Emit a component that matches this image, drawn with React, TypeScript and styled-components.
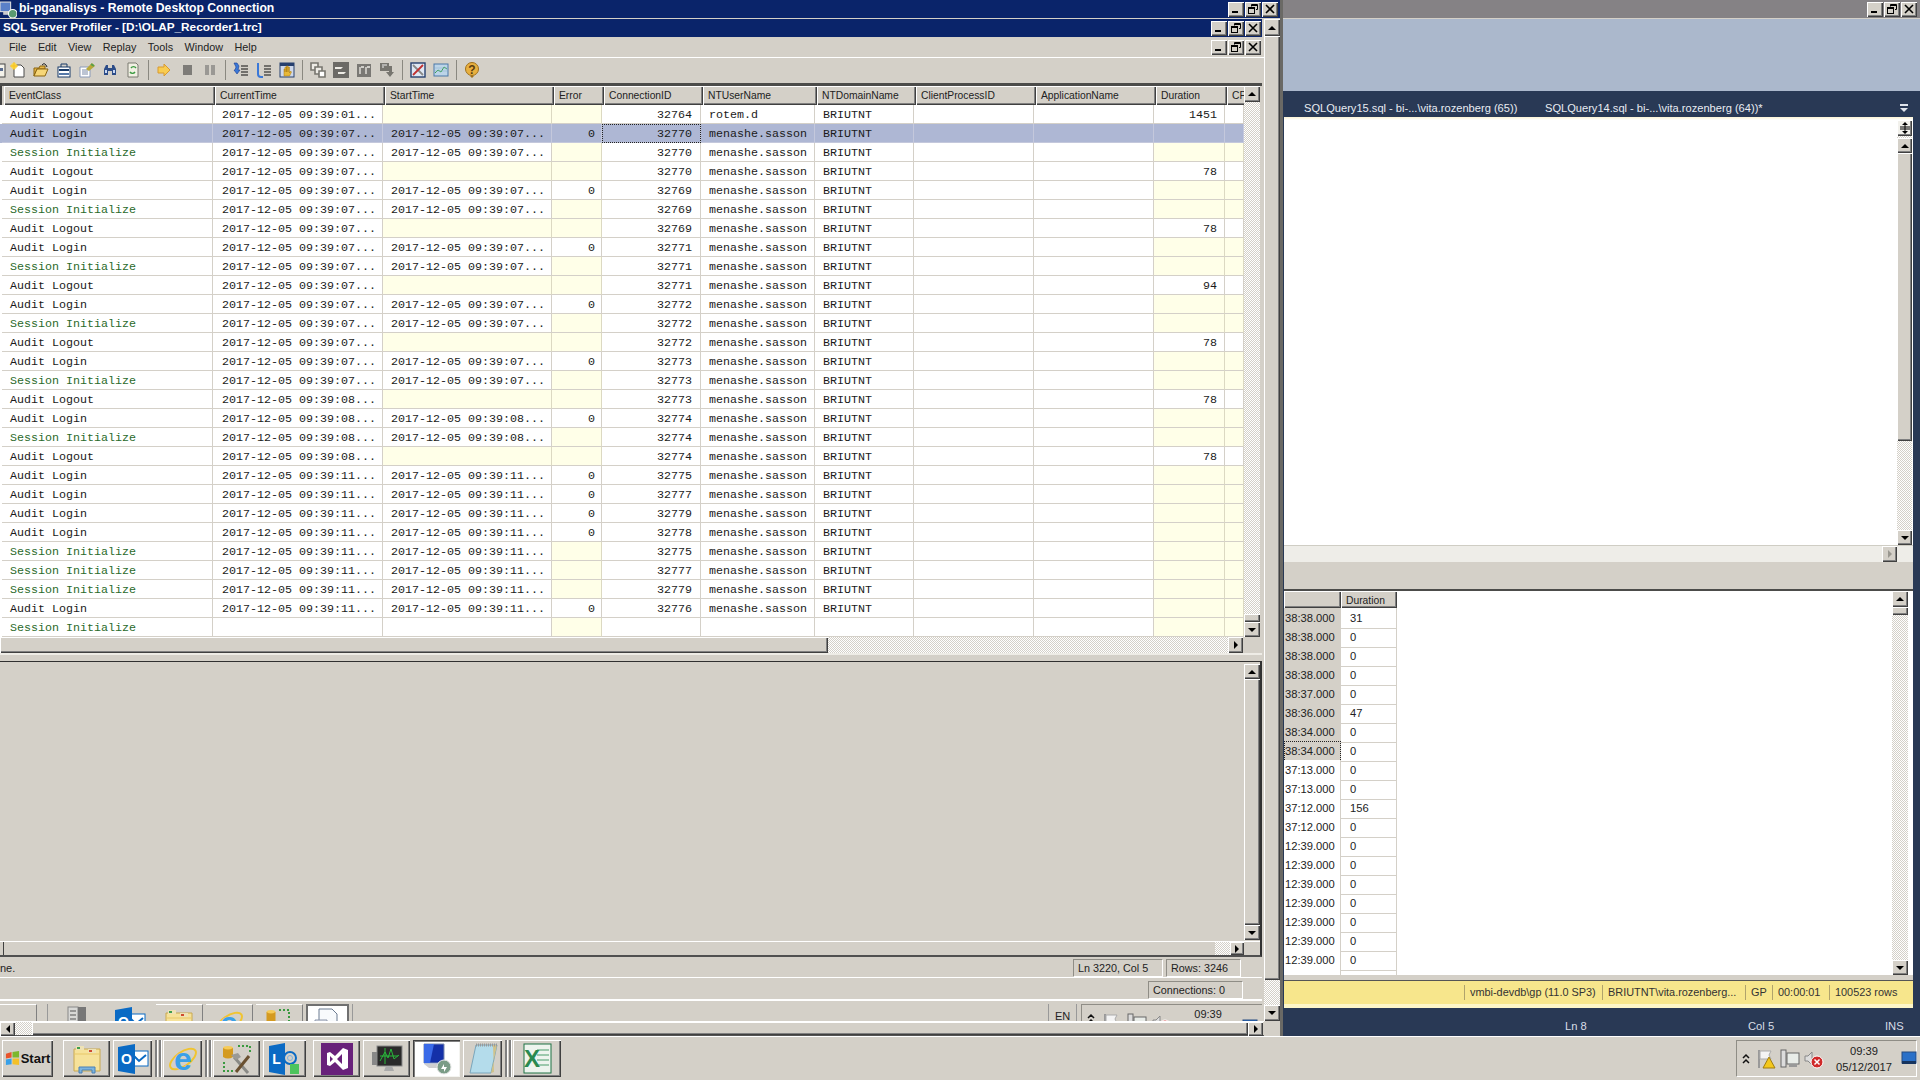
import React from "react";
import styled, { createGlobalStyle, css } from "styled-components";

const FACE = "#d4d0c8";
const UI = `"Liberation Sans", Arial, sans-serif`;
const MONO = `"Liberation Mono", "Courier New", monospace`;

const Global = createGlobalStyle`
  html, body { margin: 0; padding: 0; background: ${FACE}; overflow: hidden; }
  * { box-sizing: border-box; }
`;

const bevel = css`
  background: ${FACE};
  box-shadow: inset 1px 1px 0 #fff, inset -1px -1px 0 #404040, inset -2px -2px 0 #808080;
`;
const checker = css`
  background: repeating-conic-gradient(${FACE} 0 25%, #fff 0 50%) 0 0 / 2px 2px;
`;

const Screen = styled.div`
  width: 1920px; height: 1080px; display: flex; flex-direction: column;
  background: ${FACE}; font: 11px ${UI}; color: #111; overflow: hidden;
`;
const Desktop = styled.div`display: flex; height: 1037px; border-bottom: 1px solid #fff;`;

/* left window */
const LeftWindow = styled.div`width: 1280px; display: flex; flex-direction: column; flex: none;`;
const TitleBar = styled.div<{ $w?: number }>`
  height: 18px; flex: none; background: #0a246a; color: #fff; font-weight: bold;
  display: flex; align-items: center; gap: 2px; ${(p) => p.$w && `width: ${p.$w}px;`}
`;
const TitleText = styled.span<{ $pad?: number; $size: number }>`
  padding: 0 0 2px ${(p) => p.$pad ?? 0}px; flex: 1; white-space: nowrap; font-size: ${(p) => p.$size}px;
`;
const TitleGap = styled.div`height: 1px; background: ${FACE}; flex: none;`;
const WinBtns = styled.div<{ $end?: number }>`display: flex; gap: 1px; margin-right: ${(p) => p.$end ?? 0}px;`;
const WinBtn = styled.div`
  width: 16px; height: 15px; ${bevel}; display: flex; align-items: center; justify-content: center;
`;
const SessionRow = styled.div`display: flex; height: 1002px; flex: none;`;
const Session = styled.div`width: 1264px; flex: none; display: flex; flex-direction: column;`;
const MenuBar = styled.div`
  height: 21px; flex: none; border-bottom: 1px solid #fff; display: flex; align-items: center;
  padding-left: 9px; gap: 11.5px; font-size: 10.8px; color: #222;
`;
const MenuSpacer = styled.div`flex: 1;`;
const Toolbar = styled.div`height: 25px; flex: none; display: flex; align-items: center; padding-bottom: 2px;`;
const ToolLead = styled.div`width: 6.5px; overflow: hidden; display: flex; justify-content: flex-end; flex: none;`;
const Tool = styled.div`width: 23px; height: 18px; flex: none; display: flex; align-items: center; justify-content: center;`;
const ToolSep = styled.div`width: 8px; flex: none; display: flex; justify-content: center; &::before { content: ""; width: 1px; height: 20px; background: #8a8880; }`;

const GridFrame = styled.div`
  width: 1262px; flex: none; border-top: 3px solid #4c4c4a; display: flex; flex-direction: column;
`;
const GridBody = styled.div`display: flex; height: 551px;`;
const Table = styled.div`width: 1244px; flex: none; overflow: hidden;`;
const COLS = "211px 170px 169px 50px 99px 114px 99px 120px 120px 71px 19px";
const HeadRow = styled.div`display: grid; grid-template-columns: ${COLS}; height: 19px; padding-left: 2px; border-left: 2px solid #404040;`;
const Head = styled.div<{ $pl?: number }>`
  ${bevel}; font-size: 10.3px; color: #222; line-height: 20px; padding-left: ${(p) => p.$pl ?? 5}px;
  white-space: nowrap; overflow: hidden;
`;
const Row = styled.div<{ $sel?: boolean }>`
  display: grid; grid-template-columns: ${COLS}; height: 19px; padding-left: 2px;
  background: ${(p) => (p.$sel ? "#aeb7d4" : "#fff")};
`;
const Cell = styled.div<{ $yellow?: boolean; $right?: number; $left?: number; $color?: string; $focus?: boolean; $sel?: boolean }>`
  font: 11.67px/20px ${MONO}; color: ${(p) => p.$color ?? "#1a1a1a"}; white-space: pre; overflow: hidden;
  padding: 0 ${(p) => p.$right ?? 8}px 0 ${(p) => p.$left ?? 8}px; text-align: ${(p) => (p.$right !== undefined ? "right" : "left")};
  border-right: 1px solid ${(p) => (p.$sel ? "#c4c8dc" : p.$yellow ? "#dcd9c2" : FACE)};
  border-bottom: 1px solid ${(p) => (p.$sel ? "#c4c8dc" : FACE)};
  ${(p) => p.$yellow && !p.$sel && "background: #ffffe8;"}
  ${(p) => p.$focus && "outline: 1px dotted #222; outline-offset: -1px;"}
`;
const VScroll = styled.div<{ $w?: number }>`
  width: ${(p) => p.$w ?? 16}px; flex: none; display: flex; flex-direction: column; ${checker};
`;
const Flex = styled.div`flex: 1; min-height: 0; min-width: 0;`;
const Thumb = styled.div<{ $h?: number; $w?: number }>`
  ${bevel}; flex: ${(p) => (p.$h || p.$w ? "none" : "1")};
  ${(p) => p.$h && `height: ${p.$h}px;`} ${(p) => p.$w && `width: ${p.$w}px;`}
`;
const Arrow = styled.div<{ $dir: "up" | "down" | "left" | "right"; $h?: number; $w?: number; $off?: boolean }>`
  ${bevel}; flex: none; width: ${(p) => p.$w ?? 16}px; height: ${(p) => p.$h ?? 16}px;
  display: flex; align-items: center; justify-content: center;
  &::before {
    content: ""; width: 0; height: 0; border: 4px solid transparent;
    ${(p) => {
      const c = p.$off ? "#9a9890" : "#000";
      if (p.$dir === "up") return `border-top: 0; border-bottom-color: ${c};`;
      if (p.$dir === "down") return `border-bottom: 0; border-top-color: ${c};`;
      if (p.$dir === "left") return `border-left: 0; border-right-color: ${c};`;
      return `border-right: 0; border-left-color: ${c};`;
    }}
  }
`;
const HScroll = styled.div<{ $h?: number }>`
  height: ${(p) => p.$h ?? 16}px; flex: none; display: flex; ${checker};
`;
const CornerBox = styled.div<{ $w: number }>`width: ${(p) => p.$w}px; flex: none; background: ${FACE};`;

const PaneGap = styled.div`height: 8px; flex: none; border-top: 2px solid #eeece6; width: 1262px;`;
const LowerPane = styled.div`
  width: 1262px; height: 296px; flex: none; border-top: 1px solid #303030; border-bottom: 2px solid #505050;
  border-right: 2px solid #303030; display: flex; flex-direction: column;
`;
const LowerTop = styled.div`flex: 1; min-height: 0; display: flex;`;
const LowerScroll = styled.div`width: 16px; flex: none; display: flex; flex-direction: column; margin: 2px 0 1px;`;
const LowerH = styled.div`height: 14px; flex: none; display: flex; border-top: 1px solid #fff; padding-left: 3px;`;
const LowerTrack = styled.div`flex: 1; background: ${FACE}; box-shadow: inset 1px 0 0 #404040;`;
const CheckTrack = styled.div<{ $w?: number; $h?: number }>`
  ${checker}; ${(p) => (p.$w ? `width:${p.$w}px;flex:none;` : "flex:1;")} ${(p) => p.$h && `height:${p.$h}px;`}
`;

const StatusRow = styled.div<{ $mt: number }>`
  margin-top: ${(p) => p.$mt}px; height: 19px; flex: none; display: flex; justify-content: flex-end;
  border-bottom: 1px solid #fff; width: 1262px; align-items: stretch;
`;
const StatusLead = styled.span`flex: 1; font-size: 11px; line-height: 18px; color: #222;`;
const StatusBox = styled.div<{ $w: number; $mr?: number }>`
  width: ${(p) => p.$w}px; margin-right: ${(p) => p.$mr ?? 0}px; border: 1px solid #8f8d86; border-bottom: 1px solid #fff;
  border-right-color: #fff; padding-left: 4px; line-height: 17px; font-size: 10.8px; color: #222; white-space: nowrap;
  & + & { margin-left: 3px; }
`;
const InnerTask = styled.div`
  height: 22px; flex: none; display: flex; overflow: hidden; align-items: flex-start;
  border-top: 1px solid #fff; width: 1262px; padding-top: 3px;
`;
const Mini = styled.div<{ $w: number; $ml?: number; $on?: boolean; $bevel?: boolean }>`
  width: ${(p) => p.$w}px; margin-left: ${(p) => p.$ml ?? 0}px; height: 37px; flex: none;
  display: flex; justify-content: center; padding-top: 2px;
  ${(p) => p.$bevel && `border-right: 1px solid #808080; border-top: 1px solid #fff;`}
  ${(p) => p.$on && `background: #fff; border: 2px solid #707070; border-bottom: 0;`}
`;
const MiniSep = styled.div<{ $ml: number }>`margin-left: ${(p) => p.$ml}px; width: 1px; height: 20px; background: #999; flex: none;`;
const MiniLabel = styled.span`font-size: 11px; color: #222; padding: 6px 6px 0;`;
const MiniTray = styled.div`
  width: 181px; margin-left: 4px; height: 30px; flex: none; border: 1px solid #8f8d86; border-right: 0; display: flex;
  font-size: 11px; color: #222; padding: 3px 0 0 3px;
`;
const MiniGlyphs = styled.div`display: flex; gap: 5px; padding-top: 5px; width: 109px; flex: none;`;
const MiniClock = styled.span`width: 48px; flex: none;`;
const MiniDesk = styled.div`padding-top: 11px; flex: none;`;
const OuterH = styled.div`height: 15px; flex: none; display: flex; border-top: 1px solid #fff; width: 1264px; border-bottom: 1px solid #555;`;

/* right window */
const RightWindow = styled.div`
  width: 640px; flex: none; border-left: 3px solid #6a6965; display: flex; flex-direction: column; background: #293955;
`;
const GreyTitle = styled.div`height: 18px; flex: none; background: #858285; display: flex; justify-content: flex-end; align-items: center;`;
const BlueBand = styled.div`height: 73px; flex: none; background: #abb8cc; border-top: 1px solid #d4d0c8;`;
const Tabs = styled.div`
  height: 26px; flex: none; display: flex; align-items: center; color: #e8ecf2; font-size: 11.1px; padding-top: 7px;
`;
const Tab = styled.span<{ $w: number; $pl: number }>`width: ${(p) => p.$w}px; padding-left: ${(p) => p.$pl}px; white-space: nowrap; flex: none;`;
const TabMenu = styled.div`margin-left: auto; margin-right: 11px; display: flex;`;
const RightBody = styled.div`flex: none; display: flex; flex-direction: column; margin: 0 7px 0 1px;`;
const Cream = styled.div`height: 3px; flex: none; background: linear-gradient(#fbf3d4, #fff);`;
const Editor = styled.div`height: 425px; flex: none; background: #fff; display: flex; justify-content: flex-end; padding-right: 1px;`;
const SplitBtn = styled.div`
  height: 16px; flex: none; ${bevel}; background: #f2f1ec; display: flex; align-items: center; justify-content: center; margin-bottom: 2px;
`;
const EditorH = styled.div`height: 17px; flex: none; background: #eeede8; border-top: 1px solid #cfcdc4; display: flex; justify-content: flex-end; padding-right: 16px;`;
const Splitter = styled.div`height: 29px; flex: none; background: ${FACE}; border-bottom: 2px solid #4c4c4a;`;
const Results = styled.div`height: 384px; flex: none; background: #fff; display: flex; overflow: hidden;`;
const ResTable = styled.div`flex: 1; min-width: 0;`;
const ResHead = styled.div`display: grid; grid-template-columns: 57px 56px; width: 113px; height: 17px;`;
const ResRow = styled.div`display: grid; grid-template-columns: 57px 56px; width: 113px; height: 19px;`;
const TimeCell = styled.div<{ $sel?: boolean; $focus?: boolean }>`
  font-size: 11.2px; line-height: 20px; color: #222; padding-left: 1px; white-space: nowrap; overflow: hidden;
  background: ${(p) => (p.$sel ? FACE : "#fff")};
  border-right: 1px solid ${FACE}; border-bottom: 1px solid ${(p) => (p.$sel ? "#e6e3dc" : FACE)};
  ${(p) => p.$focus && "outline: 1px dotted #222; outline-offset: -1px;"}
`;
const ValCell = styled.div`
  font-size: 11.2px; line-height: 20px; color: #222; padding-left: 9px;
  border-right: 1px solid ${FACE}; border-bottom: 1px solid ${FACE};
`;
const ResScroll = styled.div`width: 16px; flex: none; margin-right: 5px; display: flex; flex-direction: column; ${checker};`;
const ResGap = styled.div`height: 6px; flex: none; background: ${FACE}; border-bottom: 1px solid #555;`;
const YellowBar = styled.div`
  height: 27px; flex: none; background: #f7e68c; border-bottom: 4px solid #fdf6c8; display: flex; align-items: center;
  padding-left: 180px; font-size: 10.9px; color: #333;
`;
const YellowPart = styled.div<{ $w?: number }>`
  ${(p) => (p.$w ? `width: ${p.$w}px;` : "")} flex: none; height: 15px; line-height: 15px; padding-left: 5px;
  border-left: 1px solid #b0a36c; white-space: nowrap;
`;
const Footer = styled.div`
  height: 28px; flex: none; display: grid; grid-template-columns: 183px 137px 32px; padding: 7px 0 0 282px;
  align-items: center; color: #d8dde6; font-size: 11.2px;
`;

/* taskbar */
const Taskbar = styled.div`flex: 1; display: flex; align-items: center; padding-left: 2px;`;
const Task = styled.div<{ $w: number; $ml?: number; $on?: boolean }>`
  width: ${(p) => p.$w}px; margin-left: ${(p) => p.$ml ?? 0}px; height: 37px; flex: none;
  display: flex; align-items: center; justify-content: center; gap: 1px;
  ${(p) => (p.$on
    ? `background: #fff; box-shadow: inset 1px 1px 0 #404040, inset 2px 2px 0 #808080, inset -1px -1px 0 #f4f4f0;`
    : bevel as unknown as string)}
`;
const StartLabel = styled.span`font: bold 13px ${UI}; color: #111;`;
const Grip = styled.div`
  width: 11px; height: 37px; flex: none; display: flex; justify-content: center; gap: 2px;
  &::before, &::after { content: ""; width: 2px; height: 37px; background: #808080; box-shadow: 1px 0 0 #fff; }
`;
const Tray = styled.div`
  width: 181px; height: 37px; margin-left: auto; margin-right: 3px; border: 1px solid #8f8d86; border-right-color: #fff; border-bottom-color: #fff;
  display: flex; align-items: center; padding-left: 3px; gap: 4px;
`;
const TrayClock = styled.div`width: 66px; text-align: center; line-height: 16px; font-size: 11.2px; color: #222; margin-left: 3px; flex: none;`;

/* ------- icons ------- */
const Min = () => (<svg width="10" height="10" viewBox="0 0 10 10"><rect x="1" y="7" width="6" height="2" fill="#000" /></svg>);
const Rest = () => (<svg width="10" height="10" viewBox="0 0 10 10" fill="none" stroke="#000"><path d="M3.5 2.5V.5h6v5H8" /><path d="M3.5 1.5h6" /><rect x=".5" y="3.5" width="6" height="6" /><path d="M.5 4.5h6" /></svg>);
const Cls = () => (<svg width="10" height="10" viewBox="0 0 10 10" stroke="#000" strokeWidth="1.6"><path d="M1 1l8 8M9 1l-8 8" /></svg>);
const Controls = ({ end }: { end?: number }) => (
  <WinBtns $end={end}><WinBtn><Min /></WinBtn><WinBtn><Rest /></WinBtn><WinBtn><Cls /></WinBtn></WinBtns>
);

const S = (p: { children: React.ReactNode; s?: number; v?: number }) => (
  <svg width={p.s ?? 16} height={p.s ?? 16} viewBox={`0 0 ${p.v ?? 16} ${p.v ?? 16}`} style={{ flex: "none" }}>{p.children}</svg>
);

const toolIcons: Record<string, React.ReactNode> = {
  lead: <S><rect x="2" y="2" width="12" height="13" fill="#f4f2ea" stroke="#444" /><rect x="4" y="6" width="8" height="3" fill="#5a6c90" /></S>,
  new: <S><path d="M4 3h7l3 3v9H4z" fill="#fff" stroke="#4a4a4a" /><circle cx="4" cy="4" r="3" fill="#f8d848" /><path d="M4 0v8M0 4h8" stroke="#f8c020" /></S>,
  open: <S><path d="M1 6h5l1-2h5v3H4L1 14z" fill="#e8b848" stroke="#8a6410" /><path d="M4 7h11l-3 7H1z" fill="#f6d678" stroke="#8a6410" /><path d="M9 3q2-3 4 0l1 2" fill="none" stroke="#222" /></S>,
  props: <S><rect x="2" y="5" width="12" height="10" fill="#fff" stroke="#183a68" /><rect x="3" y="7" width="10" height="2" fill="#183a68" /><rect x="3" y="11" width="10" height="2" fill="#5578a8" /><path d="M5 5V2h6v3" fill="none" stroke="#183a68" /></S>,
  tpl: <S><path d="M1 5h10v10H1z" fill="#fff" stroke="#8a9ab8" /><path d="M3 8h6M3 10h6M3 12h6" stroke="#7a8aa8" /><path d="M7 7l6-6 3 3-6 5z" fill="#b8a838" /><path d="M12 2l3 2" stroke="#58a048" strokeWidth="2" /></S>,
  find: <S><path d="M2 7l2-4h2v3h4V3h2l2 4v6H10V9H6v4H2z" fill="#2c4c88" /><rect x="3" y="8" width="2" height="3" fill="#c8d8f4" /><rect x="11" y="8" width="2" height="3" fill="#c8d8f4" /></S>,
  reload: <S><path d="M3 1h8l2 2v12H3z" fill="#f2f0e4" stroke="#7a7a70" /><path d="M6 6a3 3 0 0 1 5 0M10 10a3 3 0 0 1-5 0" fill="none" stroke="#3a9a40" strokeWidth="1.4" /></S>,
  play: <S><path d="M2 5h6V2l6 6-6 6v-3H2z" fill="#f8cc50" stroke="#d89a30" /></S>,
  stop: <S><rect x="4" y="3" width="9" height="10" fill="#7e7c78" /></S>,
  pause: <S><rect x="3" y="3" width="4" height="10" fill="#9a9894" /><rect x="9" y="3" width="4" height="10" fill="#9a9894" /></S>,
  ev1: <S><path d="M1 1l3 0 2 3-1 4h2l-3 4-3-4h1l1-3z" fill="#3a78d8" stroke="#1a3a90" strokeWidth=".6" /><path d="M8 4h7M8 7h7M8 10h7M8 13h7" stroke="#111" /></S>,
  ev2: <S><path d="M2 1v11q0 3 3 3h2" fill="none" stroke="#3a78d8" strokeWidth="2" /><path d="M8 4h7M8 7h7M8 10h7M8 13h7" stroke="#111" /></S>,
  hand: <S><rect x="1" y="1" width="14" height="14" fill="#cfd8ea" stroke="#27406e" /><rect x="1" y="1" width="14" height="3" fill="#27406e" /><path d="M5 14V7h1v3V5h1.5v5V4H9v6V5h1.500v6l1-2 1 1-2 4z" fill="#e8b838" stroke="#a87810" strokeWidth=".5" /></S>,
  casc: <S><path d="M1 1h7v7H1z" fill="#eeece6" stroke="#77756f" strokeWidth="1.6" /><path d="M5 5h7v7H5z" fill="#eeece6" stroke="#77756f" strokeWidth="1.6" /><path d="M9 9h6v6H9z" fill="#fff" stroke="#77756f" strokeWidth="1.6" /></S>,
  dark: <S><rect width="16" height="16" fill="#6c6a66" /><path d="M2 5h8l-2 2H2zM5 10h8l-2 2H5z" fill="#eeece6" /></S>,
  bars: <S><rect x="1" y="2" width="14" height="13" fill="#7a7874" /><path d="M4 5v7M5 5h3M10 5v7M11 5h3" stroke="#eeece6" strokeWidth="1.300" /></S>,
  pdown: <S><path d="M1 1h9v8H1z" fill="#77756f" /><path d="M3 3h5M3 5h2" stroke="#eee" /><path d="M10 4h3v6h2l-4 5-4-5h3z" fill="#77756f" /></S>,
  tools: <S><rect x="1" y="1" width="14" height="14" fill="#dfe8f4" stroke="#27406e" strokeWidth="1.400" /><path d="M3 3l10 10" stroke="#888" strokeWidth="1.800" /><path d="M13 3L3 13" stroke="#c03030" strokeWidth="1.800" /></S>,
  chart: <S><rect x="1" y="2" width="14" height="12" fill="#bcd4e8" stroke="#4a78a8" /><path d="M2 11l3-3 3 2 3-5 3 2" fill="none" stroke="#3aa050" /><path d="M2 6h12M2 9h12" stroke="#8ab0cc" strokeWidth=".5" /></S>,
  help: <S><circle cx="8" cy="7" r="6.500" fill="#e8b040" stroke="#a07018" /><text x="8" y="12" fontSize="12" fontWeight="bold" textAnchor="middle" fill="#5a3c10" fontFamily="Liberation Sans">?</text><path d="M6 14l4 0-2 2z" fill="#a07018" /></S>,
};
const ToolSet: (string | null)[] = ["new", "open", "props", "tpl", "find", "reload", null, "play", "stop", "pause", null, "ev1", "ev2", "hand", null, "casc", "dark", "bars", "pdown", null, "tools", "chart", null, "help"];

const FolderIcon = ({ s = 32 }: { s?: number }) => (
  <S s={s} v={32}><path d="M3 6h26v22H3z" fill="#f6e29a" stroke="#c8a850" /><rect x="5" y="3" width="8" height="4" fill="#efe2b4" /><rect x="6" y="4" width="3" height="2" fill="#3f9e50" /><rect x="17" y="6" width="8" height="4" fill="#efe2b4" /><rect x="18" y="7" width="3" height="2" fill="#d04a30" /><path d="M3 11h26" stroke="#e8c868" /><path d="M8 24h16v6h-3v-3H11v3H8z" fill="#7cb4de" stroke="#4a80b4" /></S>
);
const OutlookIcon = () => (
  <S s={32} v={32}><rect x="14" y="8" width="17" height="15" fill="#fff" stroke="#0a6ac4" /><path d="M16 12l6 6 7-6" fill="none" stroke="#0a6ac4" strokeWidth="2" /><path d="M1 4l17-3v30L1 28z" fill="#0a6ac4" /><text x="9.500" y="21" fontSize="14" fontWeight="bold" fill="#fff" textAnchor="middle" fontFamily="Liberation Sans">O</text></S>
);
const IeIcon = () => (
  <S s={32} v={32}><ellipse cx="16" cy="16" rx="15" ry="7" fill="none" stroke="#f0c430" strokeWidth="2" transform="rotate(-35 16 16)" /><text x="16" y="27" fontSize="32" fontWeight="bold" fill="#3aa0e8" textAnchor="middle" fontFamily="Liberation Sans">e</text></S>
);
const ToolsIcon = () => (
  <S s={32} v={32}><ellipse cx="7" cy="5" rx="5" ry="2" fill="#f6cb58" /><path d="M2 5v9q5 3 10 0V5q-5 3-10 0z" fill="#d49a20" /><path d="M17 3h12v6M3 19v9h9" fill="none" stroke="#3a9a40" strokeWidth="2" strokeDasharray="2 2" /><path d="M13 14l14 16" stroke="#8a8a86" strokeWidth="3" /><path d="M28 13L15 29" stroke="#6a5030" strokeWidth="3" /><path d="M10 12l7-2 3 4-5 3z" fill="#9a9a96" /></S>
);
const LyncIcon = () => (
  <S s={32} v={32}><path d="M0 3l16-3v32L0 29z" fill="#0a6ac4" /><text x="7.500" y="21" fontSize="14" fontWeight="bold" fill="#fff" textAnchor="middle" fontFamily="Liberation Sans">L</text><circle cx="21" cy="15" r="6" fill="none" stroke="#0a6ac4" strokeWidth="2" /><circle cx="21" cy="15" r="2.500" fill="none" stroke="#7ab0e0" /><rect x="21" y="21" width="9" height="10" fill="#4cc45c" /></S>
);
const VsIcon = () => (
  <S s={32} v={32}><rect width="32" height="32" fill="#68217a" /><path d="M22 5l5 2v18l-5 2-8-8-5 4-3-1V10l3-1 5 4zM9 13v6l3-3zM21 11l-5 5 5 5z" fill="#fff" fillRule="evenodd" /></S>
);
const MonIcon = () => (
  <S s={32} v={32}><rect x="1" y="9" width="5" height="13" fill="#888" /><rect x="6" y="3" width="25" height="20" fill="#2a2a2a" stroke="#8a8a8a" /><path d="M9 18l5-9 3 6 3-9 3 10 5-4M9 13h18M14 5v16" fill="none" stroke="#28b83a" /><path d="M15 23h6l2 5H13z" fill="#aaa" /></S>
);
const RdpIcon = () => (
  <S s={32} v={32}><path d="M3 1h20v19H3z" fill="#1430a8" stroke="#7a8ab0" /><path d="M3 1l10 0-4 19H3z" fill="#3a6ae8" /><path d="M3 21h20l2 4H8z" fill="#cfcfd0" /><circle cx="23" cy="24" r="7" fill="#7a9c86" stroke="#e8e8e8" /><path d="M20 26l3-5v3h3l-3 5v-3z" fill="#fff" /></S>
);
const PadIcon = () => (
  <S s={32} v={32}><path d="M9 2h21l-6 28H3z" fill="#b4dceb" stroke="#7aa6bc" /><path d="M26 2l4 0-6 28 3-1z" fill="#d0c28a" /><path d="M9 2h21" stroke="#999" strokeWidth="3" strokeDasharray="1 1" /></S>
);
const XlIcon = () => (
  <S s={32} v={32}><rect x="3" y="1" width="27" height="29" fill="#eef4ee" stroke="#1f7244" /><path d="M16 7h12M16 12h12M16 17h12M16 22h12" stroke="#9cc8ac" strokeWidth="2" /><text x="11" y="24" fontSize="24" fontWeight="bold" fill="#2a8a50" textAnchor="middle" fontFamily="Liberation Sans">X</text></S>
);
const StartFlag = () => (
  <S s={15} v={16}><path d="M1 3l6-2v6l-6 1z" fill="#e8542c" /><path d="M8 1l7-1v7l-7 0z" fill="#7cb82c" /><path d="M1 9l6-1v6l-6 1z" fill="#38a0e8" /><path d="M8 8h7v7l-7-1z" fill="#f4c028" /></S>
);
const ServerIcon = () => (
  <S s={24} v={24}><rect x="2" y="1" width="10" height="22" fill="#d8d8d6" stroke="#888" /><rect x="12" y="1" width="8" height="22" fill="#777" /><path d="M4 5h6M4 9h6M4 13h6" stroke="#555" /></S>
);
const DbMini = () => (
  <S s={28} v={28}><ellipse cx="6" cy="5" rx="4.500" ry="2" fill="#f6cb58" /><path d="M1.500 5v14q4.500 3 9 0V5q-4.500 3-9 0z" fill="#d49a20" /><path d="M14 3h10v14" fill="none" stroke="#3a9a40" strokeWidth="2" strokeDasharray="2 2" /></S>
);
const PageMini = () => (
  <S s={28} v={28}><path d="M5 1h13l5 5v20H5z" fill="#f8fafc" stroke="#6a7a90" /><path d="M1 12h12v8H1z" fill="#e8eaf0" stroke="#8a94a8" /><path d="M13 16l6 6M19 16l-6 6" stroke="#5a6a80" /></S>
);

const Chevron = () => (<S s={12} v={12}><path d="M3 5l3-3 3 3M3 10l3-3 3 3" fill="none" stroke="#111" strokeWidth="1.500" /></S>);
const FlagTray = () => (<S s={20} v={20}><path d="M3 1v18" stroke="#999" strokeWidth="2" /><path d="M4 2h11l-2 4 2 4H4z" fill="#f4f4f4" stroke="#aaa" /><path d="M13 8l6 11H7z" fill="#f4c81c" stroke="#a07c10" /></S>);
const NetTray = () => (<S s={20} v={20}><rect x="1" y="1" width="5" height="17" fill="#dcdcdc" stroke="#666" /><rect x="7" y="4" width="12" height="11" fill="#e8ece8" stroke="#666" /><rect x="9" y="15" width="8" height="3" fill="#999" /></S>);
const SoundTray = () => (<S s={20} v={20}><path d="M1 7h3l4-4v13l-4-4H1z" fill="#ddd" stroke="#888" /><circle cx="13" cy="13" r="6" fill="#d02a2a" stroke="#fff" /><path d="M10.500 10.500l5 5M15.500 10.500l-5 5" stroke="#fff" strokeWidth="1.500" /></S>);
const DeskIcon = () => (<S s={16} v={16}><rect x="1" y="1" width="14" height="11" fill="#2a70c8" stroke="#244a80" /><rect x="1" y="10" width="14" height="3" fill="#16345e" /></S>);
const SplitGlyph = () => (<S s={12} v={12}><path d="M6 0l3 3H3zM6 12l3-3H3z" fill="#000" /><path d="M1 5h10M1 7h10M6 2v8" stroke="#000" /></S>);
const TabDrop = () => (<S s={10} v={10}><rect x="1" y="1" width="8" height="2" fill="#dfe4ec" /><path d="M1 5h8L5 9z" fill="#dfe4ec" /></S>);

/* ------- data ------- */
type Kind = "Logout" | "Login" | "Init";
type Ev = { k: Kind; t: string; id: string; user?: string; dur?: string };
const day = "2017-12-05 09:39:";
const ev: Ev[] = [
  { k: "Logout", t: "01", id: "32764", user: "rotem.d", dur: "1451" },
  { k: "Login", t: "07", id: "32770" }, { k: "Init", t: "07", id: "32770" }, { k: "Logout", t: "07", id: "32770", dur: "78" },
  { k: "Login", t: "07", id: "32769" }, { k: "Init", t: "07", id: "32769" }, { k: "Logout", t: "07", id: "32769", dur: "78" },
  { k: "Login", t: "07", id: "32771" }, { k: "Init", t: "07", id: "32771" }, { k: "Logout", t: "07", id: "32771", dur: "94" },
  { k: "Login", t: "07", id: "32772" }, { k: "Init", t: "07", id: "32772" }, { k: "Logout", t: "07", id: "32772", dur: "78" },
  { k: "Login", t: "07", id: "32773" }, { k: "Init", t: "07", id: "32773" }, { k: "Logout", t: "08", id: "32773", dur: "78" },
  { k: "Login", t: "08", id: "32774" }, { k: "Init", t: "08", id: "32774" }, { k: "Logout", t: "08", id: "32774", dur: "78" },
  { k: "Login", t: "11", id: "32775" }, { k: "Login", t: "11", id: "32777" }, { k: "Login", t: "11", id: "32779" }, { k: "Login", t: "11", id: "32778" },
  { k: "Init", t: "11", id: "32775" }, { k: "Init", t: "11", id: "32777" }, { k: "Init", t: "11", id: "32779" }, { k: "Login", t: "11", id: "32776" },
];
const names: Record<Kind, string> = { Logout: "Audit Logout", Login: "Audit Login", Init: "Session Initialize" };
const heads = ["EventClass", "CurrentTime", "StartTime", "Error", "ConnectionID", "NTUserName", "NTDomainName", "ClientProcessID", "ApplicationName", "Duration", "CPU"];

const results: [string, string][] = [
  ["38:38.000", "31"], ["38:38.000", "0"], ["38:38.000", "0"], ["38:38.000", "0"], ["38:37.000", "0"], ["38:36.000", "47"],
  ["38:34.000", "0"], ["38:34.000", "0"], ["37:13.000", "0"], ["37:13.000", "0"], ["37:12.000", "156"], ["37:12.000", "0"],
  ["12:39.000", "0"], ["12:39.000", "0"], ["12:39.000", "0"], ["12:39.000", "0"], ["12:39.000", "0"], ["12:39.000", "0"], ["12:39.000", "0"], ["", ""],
];

const EventRow = ({ e, sel }: { e: Ev; sel: boolean }) => {
  const isOut = e.k === "Logout";
  const stamp = `${day}${e.t}...`;
  return (
    <Row $sel={sel}>
      <Cell $sel={sel} $color={e.k === "Init" ? "#2a6a2a" : undefined}>{names[e.k]}</Cell>
      <Cell $sel={sel} $left={9}>{stamp}</Cell>
      <Cell $sel={sel} $yellow={isOut}>{isOut ? "" : stamp}</Cell>
      <Cell $sel={sel} $yellow={e.k !== "Login"} $right={6}>{e.k === "Login" ? "0" : ""}</Cell>
      <Cell $sel={sel} $right={8} $focus={sel}>{e.id}</Cell>
      <Cell $sel={sel}>{e.user ?? "menashe.sasson"}</Cell>
      <Cell $sel={sel}>BRIUTNT</Cell>
      <Cell $sel={sel} />
      <Cell $sel={sel} />
      <Cell $sel={sel} $yellow={!isOut} $right={7}>{e.dur ?? ""}</Cell>
      <Cell $sel={sel} $yellow={!isOut} />
    </Row>
  );
};

export default function App() {
  return (
    <Screen>
      <Global />
      <Desktop>
        <LeftWindow>
          <TitleBar>
            <S s={17} v={16}><rect x="0" y="1" width="10" height="9" fill="#5a80c8" stroke="#ddd" /><rect x="3" y="10" width="6" height="3" fill="#ccc" /><circle cx="12" cy="12" r="4" fill="#5a9a70" stroke="#fff" /></S>
            <TitleText $size={12.2}>bi-pganalisys - Remote Desktop Connection</TitleText>
            <Controls end={2} />
          </TitleBar>
          <TitleGap />
          <SessionRow>
            <Session>
              <TitleBar $w={1262}>
                <TitleText $pad={3} $size={11.8}>SQL Server Profiler - [D:\OLAP_Recorder1.trc]</TitleText>
                <Controls end={1} />
              </TitleBar>
              <MenuBar>
                {["File", "Edit", "View", "Replay", "Tools", "Window", "Help"].map((m) => <span key={m}>{m}</span>)}
                <MenuSpacer />
                <Controls end={3} />
              </MenuBar>
              <Toolbar>
                <ToolLead>{toolIcons.lead}</ToolLead>
                {ToolSet.map((k, i) => (k ? <Tool key={i}>{toolIcons[k]}</Tool> : <ToolSep key={i} />))}
              </Toolbar>
              <GridFrame>
                <GridBody>
                  <Table>
                    <HeadRow>
                      {heads.map((h) => <Head key={h}>{h}</Head>)}
                    </HeadRow>
                    {ev.map((e, i) => <EventRow key={i} e={e} sel={i === 1} />)}
                    <Row>
                      <Cell $color="#2a6a2a">Session Initialize</Cell>
                      <Cell /><Cell /><Cell $yellow /><Cell /><Cell /><Cell /><Cell /><Cell /><Cell $yellow /><Cell $yellow />
                    </Row>
                  </Table>
                  <VScroll>
                    <Arrow $dir="up" $h={16} />
                    <Flex />
                    <Thumb $h={8} />
                    <Arrow $dir="down" $h={15} />
                  </VScroll>
                </GridBody>
                <HScroll>
                  <Thumb $w={828} />
                  <Flex />
                  <Arrow $dir="right" $w={15} />
                  <CornerBox $w={19} />
                </HScroll>
              </GridFrame>
              <PaneGap />
              <LowerPane>
                <LowerTop>
                  <Flex />
                  <LowerScroll>
                    <Arrow $dir="up" $h={15} />
                    <Thumb />
                    <Arrow $dir="down" $h={15} />
                  </LowerScroll>
                </LowerTop>
                <LowerH>
                  <LowerTrack />
                  <CheckTrack $w={15} />
                  <Arrow $dir="right" $w={14} $h={13} />
                  <CornerBox $w={16} />
                </LowerH>
              </LowerPane>
              <StatusRow $mt={2}>
                <StatusLead>ne.</StatusLead>
                <StatusBox $w={90}>Ln 3220, Col 5</StatusBox>
                <StatusBox $w={75} $mr={21}>Rows: 3246</StatusBox>
              </StatusRow>
              <StatusRow $mt={3}>
                <StatusLead />
                <StatusBox $w={95} $mr={19}>Connections: 0</StatusBox>
              </StatusRow>
              <InnerTask>
                <Mini $w={37} $bevel />
                <MiniSep $ml={10} />
                <Mini $w={29} $ml={15}><ServerIcon /></Mini>
                <Mini $w={32} $ml={22}><OutlookIcon /></Mini>
                <Mini $w={47} $ml={10} $bevel><FolderIcon /></Mini>
                <Mini $w={47} $ml={3} $bevel><IeIcon /></Mini>
                <Mini $w={47} $ml={3} $bevel><DbMini /></Mini>
                <Mini $w={43} $ml={3} $on><PageMini /></Mini>
                <MiniSep $ml={3} />
                <MiniSep $ml={695} />
                <MiniLabel>EN</MiniLabel>
                <MiniSep $ml={0} />
                <MiniTray>
                  <MiniGlyphs><Chevron /><FlagTray /><NetTray /><SoundTray /></MiniGlyphs>
                  <MiniClock>09:39</MiniClock>
                  <MiniDesk><DeskIcon /></MiniDesk>
                </MiniTray>
              </InnerTask>
            </Session>
            <VScroll>
              <Arrow $dir="up" $h={17} />
              <Thumb />
              <CheckTrack $w={16} $h={25} />
              <Arrow $dir="down" $h={16} />
            </VScroll>
          </SessionRow>
          <OuterH>
            <Arrow $dir="left" $w={15} $h={14} />
            <CheckTrack $w={17} />
            <Thumb />
            <Arrow $dir="right" $w={15} $h={14} />
            <CornerBox $w={1} />
          </OuterH>
        </LeftWindow>

        <RightWindow>
          <GreyTitle><Controls end={3} /></GreyTitle>
          <BlueBand />
          <Tabs>
            <Tab $w={262} $pl={21}>{"SQLQuery15.sql - bi-...\\vita.rozenberg (65))"}</Tab>
            <Tab $w={260} $pl={0}>{"SQLQuery14.sql - bi-...\\vita.rozenberg (64))*"}</Tab>
            <TabMenu><TabDrop /></TabMenu>
          </Tabs>
          <RightBody>
            <Cream />
            <Editor>
              <VScroll $w={15}>
                <SplitBtn><SplitGlyph /></SplitBtn>
                <Arrow $dir="up" $w={15} $h={15} />
                <Thumb $h={288} />
                <Flex />
                <Arrow $dir="down" $w={15} $h={15} />
              </VScroll>
            </Editor>
            <EditorH><Arrow $dir="right" $off $w={15} $h={16} /></EditorH>
            <Splitter />
            <Results>
              <ResTable>
                <ResHead>
                  <Head />
                  <Head>Duration</Head>
                </ResHead>
                {results.map(([t, v], i) => (
                  <ResRow key={i}>
                    <TimeCell $sel={i < 8} $focus={i === 7}>{t}</TimeCell>
                    <ValCell>{v}</ValCell>
                  </ResRow>
                ))}
              </ResTable>
              <ResScroll>
                <Arrow $dir="up" $h={16} />
                <Thumb $h={8} />
                <Flex />
                <Arrow $dir="down" $h={15} />
              </ResScroll>
            </Results>
            <ResGap />
            <YellowBar>
              <YellowPart $w={138}>{"vmbi-devdb\\gp (11.0 SP3)"}</YellowPart>
              <YellowPart $w={143}>{"BRIUTNT\\vita.rozenberg..."}</YellowPart>
              <YellowPart $w={27}>GP</YellowPart>
              <YellowPart $w={57}>00:00:01</YellowPart>
              <YellowPart>100523 rows</YellowPart>
            </YellowBar>
          </RightBody>
          <Footer>
            <span>Ln 8</span><span>Col 5</span><span>INS</span>
          </Footer>
        </RightWindow>
      </Desktop>

      <Taskbar>
        <Task $w={51}><StartFlag /><StartLabel>Start</StartLabel></Task>
        <Task $w={47} $ml={10}><FolderIcon /></Task>
        <Task $w={39} $ml={3}><OutlookIcon /></Task>
        <Grip />
        <Task $w={39}><IeIcon /></Task>
        <Grip />
        <Task $w={47}><ToolsIcon /></Task>
        <Task $w={43} $ml={3}><LyncIcon /></Task>
        <Task $w={47} $ml={7}><VsIcon /></Task>
        <Task $w={47} $ml={3}><MonIcon /></Task>
        <Task $w={47} $ml={3} $on><RdpIcon /></Task>
        <Task $w={39} $ml={3}><PadIcon /></Task>
        <Grip />
        <Task $w={48}><XlIcon /></Task>
        <Tray>
          <Chevron />
          <FlagTray />
          <NetTray />
          <SoundTray />
          <TrayClock>09:39<br />05/12/2017</TrayClock>
          <DeskIcon />
        </Tray>
      </Taskbar>
    </Screen>
  );
}
